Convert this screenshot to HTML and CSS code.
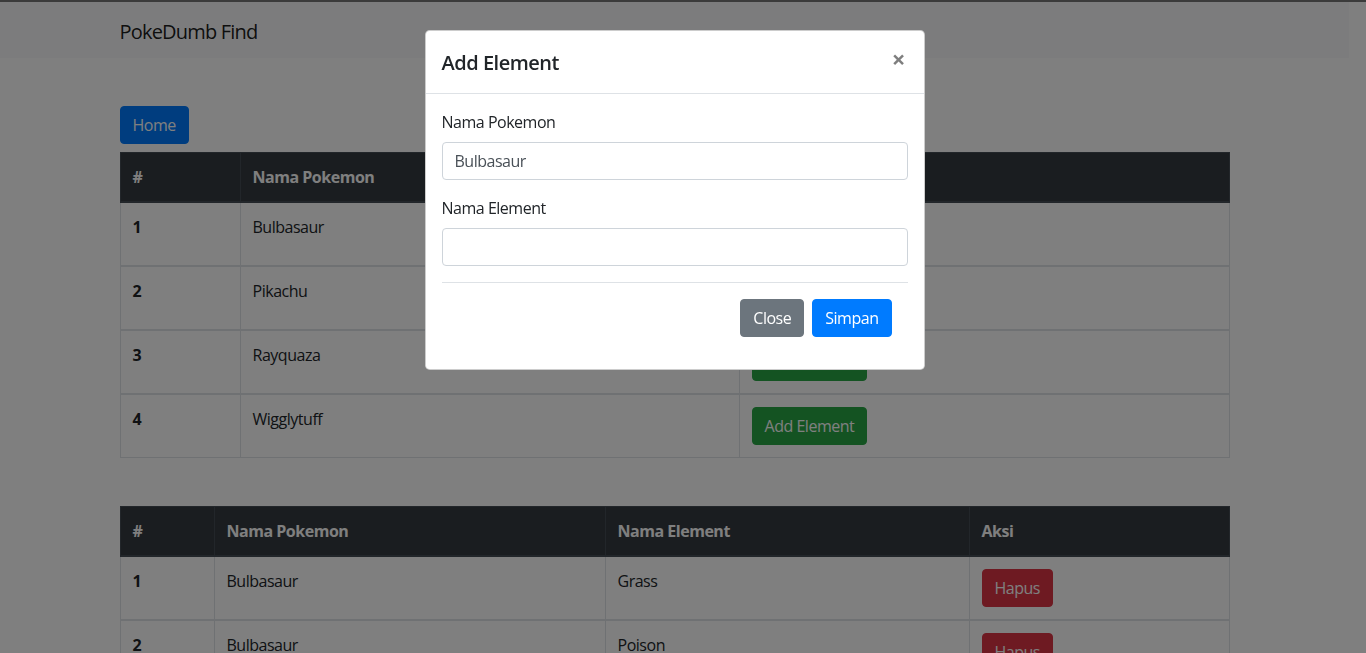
FILE: index.html
```html
<!DOCTYPE html>
<html lang="id">
<head>
<meta charset="utf-8">
<title>PokeDumb Find</title>
<link rel="stylesheet" href="styles.css">
</head>
<body class="modal-open">
  <nav class="navbar">
    <div class="container">
      <a class="navbar-brand" href="#">PokeDumb Find</a>
    </div>
  </nav>

  <main class="container main">
    <a class="btn btn-primary" href="#">Home</a>

    <table class="table table-one">
      <colgroup>
        <col class="c1-num"><col class="c1-name"><col class="c1-act">
      </colgroup>
      <thead>
        <tr><th>#</th><th>Nama Pokemon</th><th>Aksi</th></tr>
      </thead>
      <tbody>
        <tr><th>1</th><td>Bulbasaur</td><td><button class="btn btn-success">Add Element</button></td></tr>
        <tr><th>2</th><td>Pikachu</td><td><button class="btn btn-success">Add Element</button></td></tr>
        <tr><th>3</th><td>Rayquaza</td><td><button class="btn btn-success">Add Element</button></td></tr>
        <tr><th>4</th><td>Wigglytuff</td><td><button class="btn btn-success">Add Element</button></td></tr>
      </tbody>
    </table>

    <table class="table table-two">
      <colgroup>
        <col class="c2-num"><col class="c2-name"><col class="c2-el"><col class="c2-act">
      </colgroup>
      <thead>
        <tr><th>#</th><th>Nama Pokemon</th><th>Nama Element</th><th>Aksi</th></tr>
      </thead>
      <tbody>
        <tr><th>1</th><td>Bulbasaur</td><td>Grass</td><td><button class="btn btn-danger">Hapus</button></td></tr>
        <tr><th>2</th><td>Bulbasaur</td><td>Poison</td><td><button class="btn btn-danger">Hapus</button></td></tr>
      </tbody>
    </table>
  </main>

  <div class="modal-backdrop"></div>

  <div class="modal">
    <div class="modal-dialog">
      <div class="modal-content">
        <div class="modal-header">
          <h5 class="modal-title">Add Element</h5>
          <button class="close" type="button" aria-label="Close">&times;</button>
        </div>
        <div class="modal-body">
          <form>
            <div class="form-group">
              <label for="pokemon">Nama Pokemon</label>
              <input id="pokemon" class="form-control" type="text" value="Bulbasaur">
            </div>
            <div class="form-group">
              <label for="element">Nama Element</label>
              <input id="element" class="form-control" type="text">
            </div>
            <div class="modal-footer">
              <button type="button" class="btn btn-secondary">Close</button>
              <button type="submit" class="btn btn-primary">Simpan</button>
            </div>
          </form>
        </div>
      </div>
    </div>
  </div>
</body>
</html>
```

FILE: styles.css
```css
* { box-sizing: border-box; }

html, body { height: 100%; }

body {
  margin: 0;
  padding-right: 17px;
  border-top: 2px solid #777;
  font-family: "Open Sans", "Noto Sans", sans-serif;
  font-size: 16px;
  line-height: 1.5;
  letter-spacing: -0.03em;
  color: #212529;
  background: #fff;
  overflow: hidden;
}

.container {
  width: 1140px;
  margin: 0 auto;
  padding: 0 15px;
}

.navbar {
  background: #f8f9fa;
  padding: 8px 0;
}

.navbar-brand {
  display: inline-block;
  padding: 7px 0 3px;
  font-size: 20px;
  line-height: 30px;
  letter-spacing: -0.04em;
  color: rgba(0, 0, 0, .9);
  text-decoration: none;
}

.main { padding-top: 48px; }

.btn {
  display: inline-block;
  font-family: inherit;
  font-size: 16px;
  letter-spacing: inherit;
  line-height: 24px;
  padding: 6px 12px;
  border: 1px solid transparent;
  border-radius: 4px;
  text-decoration: none;
  cursor: pointer;
  color: #fff;
  vertical-align: middle;
}

.btn-primary { background: #007bff; border-color: #007bff; }
.btn-success { background: #28a745; border-color: #28a745; }
.btn-danger { background: #dc3545; border-color: #dc3545; }
.btn-secondary { background: #6c757d; border-color: #6c757d; }

.table {
  width: 100%;
  border-collapse: collapse;
  margin-top: 8px;
  margin-bottom: 16px;
  border: 1px solid #dee2e6;
}

.table-two { margin-top: 48px; }

.table th, .table td {
  padding: 12px;
  text-align: left;
  vertical-align: top;
  border: 1px solid #dee2e6;
  border-top-width: 2px;
}

.table thead th {
  background: #343a40;
  color: #fff;
  border-color: #454d55;
  border-top-width: 1px;
  border-bottom-width: 2px;
  font-weight: 700;
}

.table tbody th { font-weight: 700; }

.c1-num { width: 120px; }
.c1-name { width: 499px; }
.c2-num { width: 94px; }
.c2-name { width: 391px; }
.c2-el { width: 364px; }

.modal-backdrop {
  position: fixed;
  inset: 0;
  background: #000;
  opacity: .5;
}

.modal {
  position: fixed;
  top: 2px;
  left: 0;
  right: 0;
  bottom: 0;
  padding-right: 17px;
}

.modal-dialog {
  width: 500px;
  margin: 28px auto;
}

.modal-content {
  background: #fff;
  border: 1px solid rgba(0, 0, 0, .2);
  border-radius: 4.8px;
}

.modal-header {
  display: flex;
  align-items: flex-start;
  justify-content: space-between;
  padding: 16px;
  border-bottom: 1px solid #dee2e6;
}

.modal-title {
  margin: 0;
  padding-top: 1px;
  margin-bottom: -1px;
  font-size: 20px;
  font-weight: 600;
  line-height: 30px;
}

.close {
  padding: 16px;
  margin: -16px -14px -16px auto;
  background: transparent;
  border: 0;
  font-family: inherit;
  font-size: 24px;
  font-weight: 700;
  line-height: 1;
  color: #000;
  opacity: .5;
  text-shadow: 0 1px 0 #fff;
  cursor: pointer;
}

.modal-body { padding: 16px; }

.form-group { margin-bottom: 16px; }

.form-group label {
  display: inline-block;
  margin-bottom: 8px;
}

.form-control {
  display: block;
  width: 100%;
  height: 38px;
  padding: 6px 12px;
  font-family: inherit;
  font-size: 16px;
  letter-spacing: inherit;
  line-height: 24px;
  color: #495057;
  background: #fff;
  border: 1px solid #ced4da;
  border-radius: 4px;
}

.modal-footer {
  display: flex;
  justify-content: flex-end;
  align-items: center;
  padding: 12px;
  border-top: 1px solid #dee2e6;
}

.modal-footer .btn { margin: 4px; }
```
